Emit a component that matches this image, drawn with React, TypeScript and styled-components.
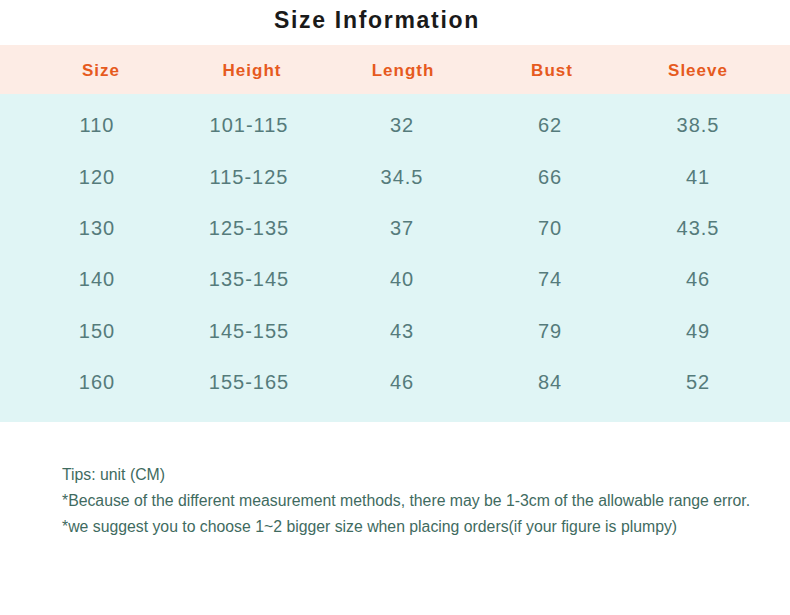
import React from 'react'
import styled, { createGlobalStyle } from 'styled-components'

const SIZE_ROWS = [
  ['110', '101-115', '32', '62', '38.5'],
  ['120', '115-125', '34.5', '66', '41'],
  ['130', '125-135', '37', '70', '43.5'],
  ['140', '135-145', '40', '74', '46'],
  ['150', '145-155', '43', '79', '49'],
  ['160', '155-165', '46', '84', '52']
]

const HEADERS = ['Size', 'Height', 'Length', 'Bust', 'Sleeve']

const TIPS = [
  'Tips: unit (CM)',
  '*Because of the different measurement methods, there may be 1-3cm of the allowable range error.',
  '*we suggest you to choose 1~2 bigger size when placing orders(if your figure is plumpy)'
]

const GlobalStyle = createGlobalStyle`
  html, body {
    margin: 0;
    padding: 0;
    background: #ffffff;
  }
  body {
    font-family: 'Liberation Sans', Arial, sans-serif;
  }
`

export default function App() {
  return (
    <>
      <GlobalStyle />
      <Page>
        <Title>Size Information</Title>
        <HeaderBand>
          {HEADERS.map((h) => (
            <HeaderCell key={h}>{h}</HeaderCell>
          ))}
        </HeaderBand>
        <Body>
          {SIZE_ROWS.map((row) => (
            <Row key={row[0]}>
              {row.map((value, i) => (
                <Cell key={i}>{value}</Cell>
              ))}
            </Row>
          ))}
        </Body>
        <Tips>
          {TIPS.map((t) => (
            <TipLine key={t}>{t}</TipLine>
          ))}
        </Tips>
      </Page>
    </>
  )
}

const Page = styled.div`
  width: 790px;
  height: 615px;
  overflow: hidden;
  background: #ffffff;
`

const Title = styled.h1`
  margin: 0;
  height: 45px;
  padding-right: 36px;
  line-height: 40px;
  text-align: center;
  font-size: 23px;
  font-weight: 700;
  letter-spacing: 1.7px;
  color: #1a1a1a;
`

const HeaderBand = styled.div`
  box-sizing: border-box;
  display: grid;
  grid-template-columns: 152px 150px 152px 146px 146px;
  padding: 2px 0 0 25px;
  height: 49px;
  align-items: center;
  background: #fdece5;
`

const HeaderCell = styled.div`
  text-align: center;
  font-size: 17px;
  font-weight: 700;
  letter-spacing: 1px;
  color: #e65a1e;
`

const Body = styled.div`
  background: #e0f5f5;
  padding: 6px 0 13.6px;
`

const Row = styled.div`
  display: grid;
  grid-template-columns: 152px 152px 154px 142px 154px;
  padding-left: 21px;
  height: 51.4px;
  align-items: center;
`

const Cell = styled.div`
  text-align: center;
  font-size: 20px;
  letter-spacing: 1px;
  color: #557b7b;
`

const Tips = styled.div`
  margin-top: 40px;
  padding-left: 62px;
`

const TipLine = styled.div`
  font-size: 15.8px;
  line-height: 26px;
  color: #3f6b5f;
`
